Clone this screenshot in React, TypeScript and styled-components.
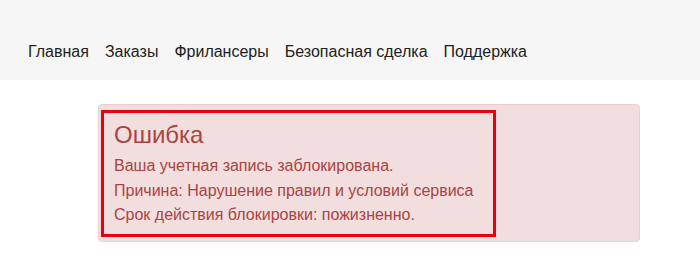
import styled, { createGlobalStyle } from 'styled-components';

const GlobalStyle = createGlobalStyle`
  body {
    margin: 0;
    background: #ffffff;
    font-family: 'Liberation Sans', Arial, sans-serif;
  }
`;

const navItems = ['Главная', 'Заказы', 'Фрилансеры', 'Безопасная сделка', 'Поддержка'];

const reasons = [
  'Ваша учетная запись заблокирована.',
  'Причина: Нарушение правил и условий сервиса',
  'Срок действия блокировки: пожизненно.',
];

export default function App() {
  return (
    <>
      <GlobalStyle />
      <Navbar>
        <NavList>
          {navItems.map((item) => (
            <NavLink key={item}>{item}</NavLink>
          ))}
        </NavList>
      </Navbar>
      <Main>
        <Alert>
          <Highlight>
            <AlertTitle>Ошибка</AlertTitle>
            {reasons.map((line) => (
              <AlertLine key={line}>{line}</AlertLine>
            ))}
          </Highlight>
        </Alert>
      </Main>
    </>
  );
}

const Navbar = styled.nav`
  height: 80px;
  background: #f6f6f6;
  display: flex;
  align-items: flex-end;
  padding: 0 0 18px 28px;
  box-sizing: border-box;
`;

const NavList = styled.div`
  display: flex;
  gap: 16px;
`;

const NavLink = styled.a`
  font-size: 16px;
  line-height: 20px;
  color: #222;
  cursor: pointer;
`;

const Main = styled.main`
  padding: 24px 0 0 98px;
`;

const Alert = styled.div`
  width: 542px;
  height: 138px;
  box-sizing: border-box;
  background: #f2dede;
  border: 1px solid #ebccd1;
  border-radius: 4px;
  padding: 5px 0 0 2px;
`;

const Highlight = styled.div`
  width: 395px;
  height: 127px;
  box-sizing: border-box;
  border: 3px solid #e8000b;
  padding: 7px 10px 0;
  color: #a94442;
`;

const AlertTitle = styled.div`
  font-size: 24px;
  line-height: 30px;
  margin-bottom: 4px;
`;

const AlertLine = styled.div`
  font-size: 16px;
  line-height: 24.5px;
`;
